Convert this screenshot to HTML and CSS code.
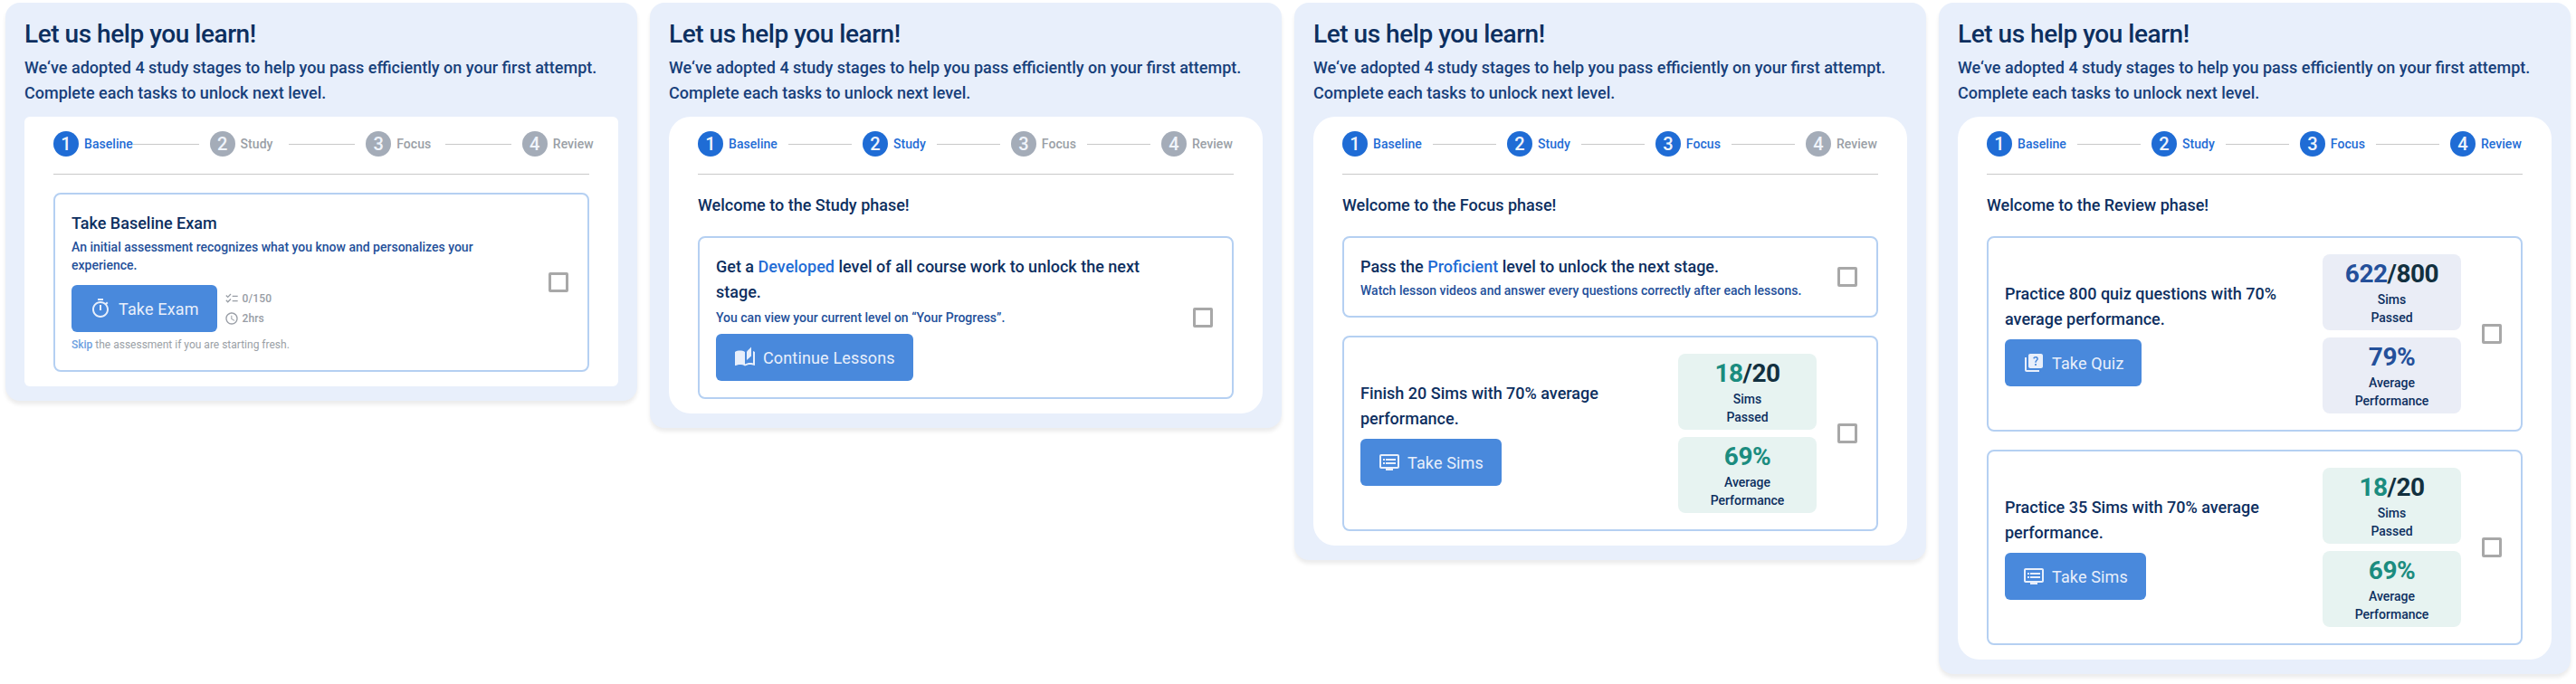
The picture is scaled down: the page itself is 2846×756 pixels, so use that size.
FILE: index.html
```html
<!DOCTYPE html>
<html lang="en">
<head>
    <meta charset="UTF-8">
    <meta name="viewport" content="width=device-width, initial-scale=1.0">
    <title>Study Stages</title>
    <link rel="stylesheet" href="styles.css">
</head>
<body>
    <!-- Shared button icons -->
    <svg class="icon-defs" aria-hidden="true">
        <symbol id="icon-timer" viewBox="0 0 24 24">
            <path d="M9 1h6v2H9zM11 8h2v6h-2z"/>
            <path d="M19.03 7.39l1.42-1.42c-.43-.51-.9-.99-1.41-1.41l-1.42 1.42C16.07 4.74 14.12 4 12 4c-4.97 0-9 4.03-9 9s4.02 9 9 9 9-4.03 9-9c0-2.12-.74-4.07-1.97-5.61zM12 20c-3.87 0-7-3.13-7-7s3.13-7 7-7 7 3.13 7 7-3.13 7-7 7z"/>
        </symbol>
        <symbol id="icon-stories" viewBox="0 0 24 24">
            <path d="M19 .5l-5 5V15l5-4.5z"/>
            <path d="M1 6v14.65c0 .25.25.5.5.5.1 0 .15-.05.25-.05C3.1 20.45 5.05 20 6.5 20c1.95 0 4.05.4 5.5 1.5V6c-1.45-1.1-3.55-1.5-5.5-1.5S2.45 4.9 1 6z"/>
            <path d="M23 19.5V6c-.6-.45-1.25-.75-2-1v13.5c-1.1-.35-2.3-.5-3.5-.5-1.7 0-4.15.65-5.5 1.5v2c1.35-.85 3.8-1.5 5.5-1.5 1.65 0 3.35.3 4.75 1.05.1.05.15.05.25.05.25 0 .5-.25.5-.5v-1.1z"/>
        </symbol>
        <symbol id="icon-dvr" viewBox="0 0 24 24">
            <path d="M21 3H3c-1.1 0-2 .9-2 2v12c0 1.1.9 2 2 2h5v2h8v-2h5c1.1 0 1.99-.9 1.99-2L23 5c0-1.1-.9-2-2-2zm0 14H3V5h18v12zm-2-9H8v2h11V8zm0 4H8v2h11v-2zM7 8H5v2h2V8zm0 4H5v2h2v-2z"/>
        </symbol>
        <symbol id="icon-quiz" viewBox="0 0 24 24">
            <path d="M4 6H2v14c0 1.1.9 2 2 2h14v-2H4V6z"/>
            <path d="M20 2H8c-1.1 0-2 .9-2 2v12c0 1.1.9 2 2 2h12c1.1 0 2-.9 2-2V4c0-1.1-.9-2-2-2zm-5.99 13c-.59 0-1.05-.47-1.05-1.05 0-.59.47-1.04 1.05-1.04.59 0 1.04.45 1.04 1.04-.01.58-.45 1.05-1.04 1.05zm2.5-6.17c-.63.93-1.23 1.21-1.56 1.81-.13.24-.18.4-.18 1.18h-1.52c0-.41-.06-1.08.26-1.65.41-.73 1.18-1.16 1.63-1.8.48-.68.21-1.94-1.14-1.94-.88 0-1.32.67-1.5 1.23l-1.37-.57C11.51 5.96 12.52 5 13.99 5c1.23 0 2.08.56 2.51 1.26.37.61.58 1.73.01 2.57z"/>
        </symbol>
        <symbol id="icon-checklist" viewBox="0 0 24 24">
            <path d="M22 7h-9v2h9V7zm0 8h-9v2h9v-2zM5.54 11L2 7.46l1.41-1.41 2.12 2.12 4.24-4.24 1.41 1.41L5.54 11zm0 8L2 15.46l1.41-1.41 2.12 2.12 4.24-4.24 1.41 1.41L5.54 19z"/>
        </symbol>
        <symbol id="icon-clock" viewBox="0 0 24 24">
            <path d="M11.99 2C6.47 2 2 6.48 2 12s4.47 10 9.99 10C17.52 22 22 17.52 22 12S17.52 2 11.99 2zM12 20c-4.42 0-8-3.58-8-8s3.58-8 8-8 8 3.58 8 8-3.58 8-8 8zm.5-13H11v6l5.25 3.15.75-1.23-4.5-2.67z"/>
        </symbol>
    </svg>

    <div class="board">
        <!-- Stage 1: Baseline -->
        <section class="card">
            <h1>Let us help you learn!</h1>
            <p class="intro">We‘ve adopted 4 study stages to help you pass efficiently on your first attempt. Complete each tasks to unlock next level.</p>
            <div class="panel panel-square">
                <div class="stepper stepper-even">
                    <div class="step done"><span class="dot">1</span><span class="label">Baseline</span></div>
                    <div class="line"></div>
                    <div class="step"><span class="dot">2</span><span class="label">Study</span></div>
                    <div class="line"></div>
                    <div class="step"><span class="dot">3</span><span class="label">Focus</span></div>
                    <div class="line"></div>
                    <div class="step"><span class="dot">4</span><span class="label">Review</span></div>
                </div>
                <div class="task task-exam">
                    <div class="task-body">
                        <h3>Take Baseline Exam</h3>
                        <p class="note">An initial assessment recognizes what you know and personalizes your experience.</p>
                        <div class="exam-row">
                            <button class="button"><svg class="icon"><use href="#icon-timer"/></svg>Take Exam</button>
                            <div class="exam-info">
                                <span><svg class="icon-small"><use href="#icon-checklist"/></svg>0/150</span>
                                <span><svg class="icon-small"><use href="#icon-clock"/></svg>2hrs</span>
                            </div>
                        </div>
                        <p class="skip"><a>Skip</a> the assessment if you are starting fresh.</p>
                    </div>
                    <span class="check"></span>
                </div>
            </div>
        </section>

        <!-- Stage 2: Study -->
        <section class="card">
            <h1>Let us help you learn!</h1>
            <p class="intro">We‘ve adopted 4 study stages to help you pass efficiently on your first attempt. Complete each tasks to unlock next level.</p>
            <div class="panel">
                <div class="stepper">
                    <div class="step done"><span class="dot">1</span><span class="label">Baseline</span></div>
                    <div class="line"></div>
                    <div class="step done"><span class="dot">2</span><span class="label">Study</span></div>
                    <div class="line"></div>
                    <div class="step"><span class="dot">3</span><span class="label">Focus</span></div>
                    <div class="line"></div>
                    <div class="step"><span class="dot">4</span><span class="label">Review</span></div>
                </div>
                <h2>Welcome to the Study phase!</h2>
                <div class="task task-lessons">
                    <div class="task-body">
                        <h3>Get a <span class="level">Developed</span> level of all course work to unlock the next stage.</h3>
                        <p class="note">You can view your current level on “Your Progress”.</p>
                        <button class="button"><svg class="icon"><use href="#icon-stories"/></svg>Continue Lessons</button>
                    </div>
                    <span class="check"></span>
                </div>
            </div>
        </section>

        <!-- Stage 3: Focus -->
        <section class="card">
            <h1>Let us help you learn!</h1>
            <p class="intro">We‘ve adopted 4 study stages to help you pass efficiently on your first attempt. Complete each tasks to unlock next level.</p>
            <div class="panel">
                <div class="stepper">
                    <div class="step done"><span class="dot">1</span><span class="label">Baseline</span></div>
                    <div class="line"></div>
                    <div class="step done"><span class="dot">2</span><span class="label">Study</span></div>
                    <div class="line"></div>
                    <div class="step done"><span class="dot">3</span><span class="label">Focus</span></div>
                    <div class="line"></div>
                    <div class="step"><span class="dot">4</span><span class="label">Review</span></div>
                </div>
                <h2>Welcome to the Focus phase!</h2>
                <div class="task task-short">
                    <div class="task-body">
                        <h3>Pass the <span class="level">Proficient</span> level to unlock the next stage.</h3>
                        <p class="note">Watch lesson videos and answer every questions correctly after each lessons.</p>
                    </div>
                    <span class="check"></span>
                </div>
                <div class="task task-stats">
                    <div class="task-body">
                        <h3>Finish 20 Sims with 70% average performance.</h3>
                        <button class="button"><svg class="icon"><use href="#icon-dvr"/></svg>Take Sims</button>
                    </div>
                    <div class="stats">
                        <div class="stat green"><b>18<i>/20</i></b><span>Sims<br>Passed</span></div>
                        <div class="stat green"><b>69%</b><span>Average<br>Performance</span></div>
                    </div>
                    <span class="check"></span>
                </div>
            </div>
        </section>

        <!-- Stage 4: Review -->
        <section class="card">
            <h1>Let us help you learn!</h1>
            <p class="intro">We‘ve adopted 4 study stages to help you pass efficiently on your first attempt. Complete each tasks to unlock next level.</p>
            <div class="panel">
                <div class="stepper">
                    <div class="step done"><span class="dot">1</span><span class="label">Baseline</span></div>
                    <div class="line"></div>
                    <div class="step done"><span class="dot">2</span><span class="label">Study</span></div>
                    <div class="line"></div>
                    <div class="step done"><span class="dot">3</span><span class="label">Focus</span></div>
                    <div class="line"></div>
                    <div class="step done"><span class="dot">4</span><span class="label">Review</span></div>
                </div>
                <h2>Welcome to the Review phase!</h2>
                <div class="task task-stats">
                    <div class="task-body">
                        <h3>Practice 800 quiz questions with 70% average performance.</h3>
                        <button class="button"><svg class="icon"><use href="#icon-quiz"/></svg>Take Quiz</button>
                    </div>
                    <div class="stats">
                        <div class="stat blue"><b>622<i>/800</i></b><span>Sims<br>Passed</span></div>
                        <div class="stat blue"><b>79%</b><span>Average<br>Performance</span></div>
                    </div>
                    <span class="check"></span>
                </div>
                <div class="task task-stats">
                    <div class="task-body">
                        <h3>Practice 35 Sims with 70% average performance.</h3>
                        <button class="button"><svg class="icon"><use href="#icon-dvr"/></svg>Take Sims</button>
                    </div>
                    <div class="stats">
                        <div class="stat green"><b>18<i>/20</i></b><span>Sims<br>Passed</span></div>
                        <div class="stat green"><b>69%</b><span>Average<br>Performance</span></div>
                    </div>
                    <span class="check"></span>
                </div>
            </div>
        </section>
    </div>
</body>
</html>
```
FILE: styles.css
```css
* {
    box-sizing: border-box;
}

body {
    margin: 0;
    background-color: #fff;
    color: #0d2f5f;
    font-family: Roboto, 'Liberation Sans', sans-serif;
    font-weight: 500;
}

h1, h2, h3, p {
    margin: 0;
    font-weight: 500;
}

.icon-defs {
    display: none;
}

.board {
    display: flex;
    align-items: flex-start;
    gap: 14px;
    min-height: 100vh;
    padding: 3px 6px 0;
}

.card {
    flex: none;
    width: 698px;
    padding: 16px 21px;
    background-color: #e8effb;
    border-radius: 16px;
    box-shadow: 0 4px 4px rgba(0, 0, 0, 0.08);
}

h1 {
    font-size: 28px;
    line-height: 37px;
    letter-spacing: -0.46px;
}

.intro {
    margin-top: 5px;
    font-size: 18px;
    line-height: 28px;
    color: #17407a;
}

.panel {
    margin-top: 12px;
    padding: 16px 32px;
    background-color: #fff;
    border-radius: 24px;
}

.panel-square {
    border-radius: 6px;
}

/* Stepper */
.stepper {
    display: flex;
    align-items: center;
    gap: 12px;
    height: 48px;
    padding-bottom: 19px;
    margin-bottom: 20px;
    border-bottom: 1px solid #c9c9c9;
}

.step {
    display: flex;
    align-items: center;
    gap: 6px;
    white-space: nowrap;
    font-size: 14px;
    letter-spacing: 0.05px;
    color: #9a9fa6;
}

.dot {
    flex: none;
    width: 28px;
    height: 28px;
    border-radius: 50%;
    background-color: #a4acb8;
    color: #f0f4fb;
    font-size: 20px;
    line-height: 28px;
    text-align: center;
}

.step.done {
    color: #1f6cd5;
}

.step.done .dot {
    background-color: #1f6cd5;
}

.line {
    flex: none;
    width: 70px;
    height: 1px;
    background-color: #c9c9c9;
}

.stepper-even .step {
    flex: none;
    width: 75.6px;
}

.stepper-even .line {
    width: 73px;
}

h2 {
    margin-bottom: 20px;
    font-size: 18px;
    line-height: 28px;
}

/* Tasks */
.task {
    display: flex;
    align-items: center;
    padding: 0 21px 0 18px;
    border: 2px solid #b5d0f2;
    border-radius: 8px;
}

.task + .task {
    margin-top: 20px;
}

.task-body {
    flex: 1;
}

.task-exam {
    height: 198px;
}

.task-lessons {
    height: 180px;
}

.task-short {
    height: 90px;
}

.task-stats {
    height: 216px;
}

.task-exam .task-body,
.task-lessons .task-body {
    padding-right: 40px;
}

h3 {
    font-size: 18px;
    line-height: 28px;
}

.level {
    color: #1f6cd5;
}

.note {
    margin-top: 2px;
    font-size: 14px;
    line-height: 20px;
    color: #24509a;
}

.task-lessons .note {
    margin-top: 4px;
}

.button {
    display: flex;
    align-items: center;
    gap: 8px;
    height: 52px;
    padding: 0 20px;
    background-color: #4989dc;
    border: none;
    border-radius: 6px;
    color: #e8effb;
    font-family: inherit;
    font-size: 18px;
    font-weight: 400;
    letter-spacing: 0.15px;
    white-space: nowrap;
}

.icon {
    width: 24px;
    height: 24px;
    fill: #e8effb;
}

.task-lessons .button,
.task-stats .button {
    margin-top: 8px;
}

.exam-row {
    display: flex;
    align-items: center;
    gap: 8px;
    margin-top: 12px;
}

.exam-info span {
    display: flex;
    align-items: center;
    gap: 4px;
    height: 22px;
    font-size: 12px;
    letter-spacing: 0.1px;
    color: #989da5;
}

.icon-small {
    width: 16px;
    height: 16px;
    fill: #989da5;
}

.skip {
    margin-top: 4px;
    font-size: 12px;
    line-height: 20px;
    font-weight: 400;
    color: #9a9fa6;
}

.skip a {
    color: #6c9fe0;
    font-weight: 500;
}

.check {
    flex: none;
    width: 22px;
    height: 22px;
    border: 3px solid #a8a8a8;
    border-radius: 2px;
}

/* Score boxes */
.stats {
    display: flex;
    flex-direction: column;
    gap: 8px;
    margin-right: 23px;
}

.stat {
    width: 153px;
    height: 84px;
    padding-top: 4px;
    border-radius: 8px;
    text-align: center;
}

.stat b {
    display: block;
    font-size: 28px;
    line-height: 36px;
    font-weight: 700;
    letter-spacing: -0.5px;
}

.stat i {
    font-style: normal;
    color: #12303f;
}

.stat span {
    display: block;
    font-size: 14px;
    line-height: 20px;
}

.stat.green {
    background-color: #e7f3f1;
}

.stat.green b {
    color: #1b8c7f;
}

.stat.blue {
    background-color: #eaedf6;
}

.stat.blue b {
    color: #24509a;
}
```
